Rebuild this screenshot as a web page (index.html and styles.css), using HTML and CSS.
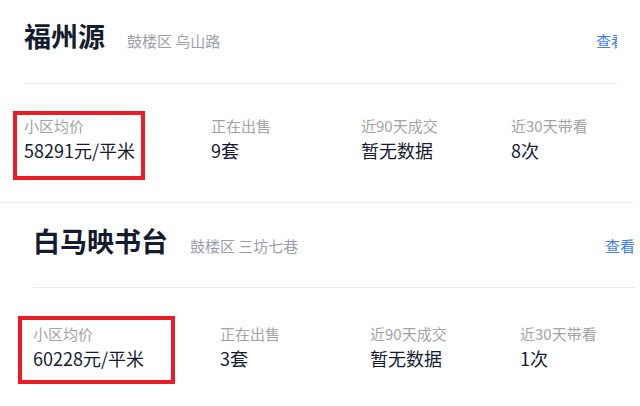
FILE: index.html
```html
<!DOCTYPE html>
<html lang="zh-CN">
<head>
<meta charset="utf-8">
<title>小区列表</title>
<link rel="stylesheet" href="styles.css">
</head>
<body>
<div class="page">
  <section class="card card-a">
    <div class="inner">
      <div class="head">
        <h2 class="name">福州源</h2>
        <span class="addr">鼓楼区 乌山路</span>
        <a class="more">查看</a>
      </div>
      <div class="stats">
        <div class="stat"><div class="label">小区均价</div><div class="value">58291元/平米</div></div>
        <div class="stat"><div class="label">正在出售</div><div class="value">9套</div></div>
        <div class="stat"><div class="label">近90天成交</div><div class="value">暂无数据</div></div>
        <div class="stat"><div class="label">近30天带看</div><div class="value">8次</div></div>
      </div>
    </div>
  </section>
  <section class="card card-b">
    <div class="inner">
      <div class="head">
        <h2 class="name">白马映书台</h2>
        <span class="addr">鼓楼区 三坊七巷</span>
        <a class="more">查看</a>
      </div>
      <div class="stats">
        <div class="stat"><div class="label">小区均价</div><div class="value">60228元/平米</div></div>
        <div class="stat"><div class="label">正在出售</div><div class="value">3套</div></div>
        <div class="stat"><div class="label">近90天成交</div><div class="value">暂无数据</div></div>
        <div class="stat"><div class="label">近30天带看</div><div class="value">1次</div></div>
      </div>
    </div>
  </section>
  <div class="mark mark-a"></div>
  <div class="mark mark-b"></div>
</div>
</body>
</html>
```
FILE: styles.css
```css
html, body {
  margin: 0;
  padding: 0;
  background: #ffffff;
}
body {
  font-family: "Noto Sans CJK SC", "Noto Sans", sans-serif;
  width: 640px;
  height: 406px;
  overflow: hidden;
}
.page {
  position: relative;
  width: 635px;
}
.card {
  overflow: hidden;
}
.card-a {
  width: 617px;
}
.card-b {
  width: 635px;
  border-top: 1px solid #ececec;
}
.inner {
  width: 602px;
}
.card-a .inner { margin-left: 24px; }
.card-b .inner { margin-left: 33px; }

.head {
  display: flex;
  align-items: baseline;
  height: 40px;
  border-bottom: 1px solid #ececec;
}
.card-a .head { padding-top: 16px; padding-bottom: 27px; }
.card-b .head { padding-top: 18px; padding-bottom: 26px; }

.name {
  margin: 0;
  font-size: 27px;
  line-height: 40px;
  font-weight: 700;
  color: #141c30;
}
.addr {
  margin-left: 22px;
  font-size: 15px;
  color: #9aa0aa;
}
.more {
  margin-left: auto;
  font-size: 15px;
  color: #3f7ef8;
  cursor: pointer;
}
.stats {
  display: grid;
  grid-template-columns: 187px 150px 150px 1fr;
}
.card-a .stats { padding-top: 32px; height: 86px; }
.card-b .stats { padding-top: 36px; height: 80px; }
.label {
  font-size: 15px;
  line-height: 20px;
  color: #a3a3a3;
}
.value {
  font-size: 18px;
  line-height: 24px;
  margin-top: 2px;
  color: #151d33;
}
.mark {
  position: absolute;
  border: 4px solid #ec1c24;
  box-sizing: border-box;
}
.mark-a { left: 13px; top: 111px; width: 132px; height: 69px; }
.mark-b { left: 18px; top: 316px; width: 157px; height: 68px; }
```
